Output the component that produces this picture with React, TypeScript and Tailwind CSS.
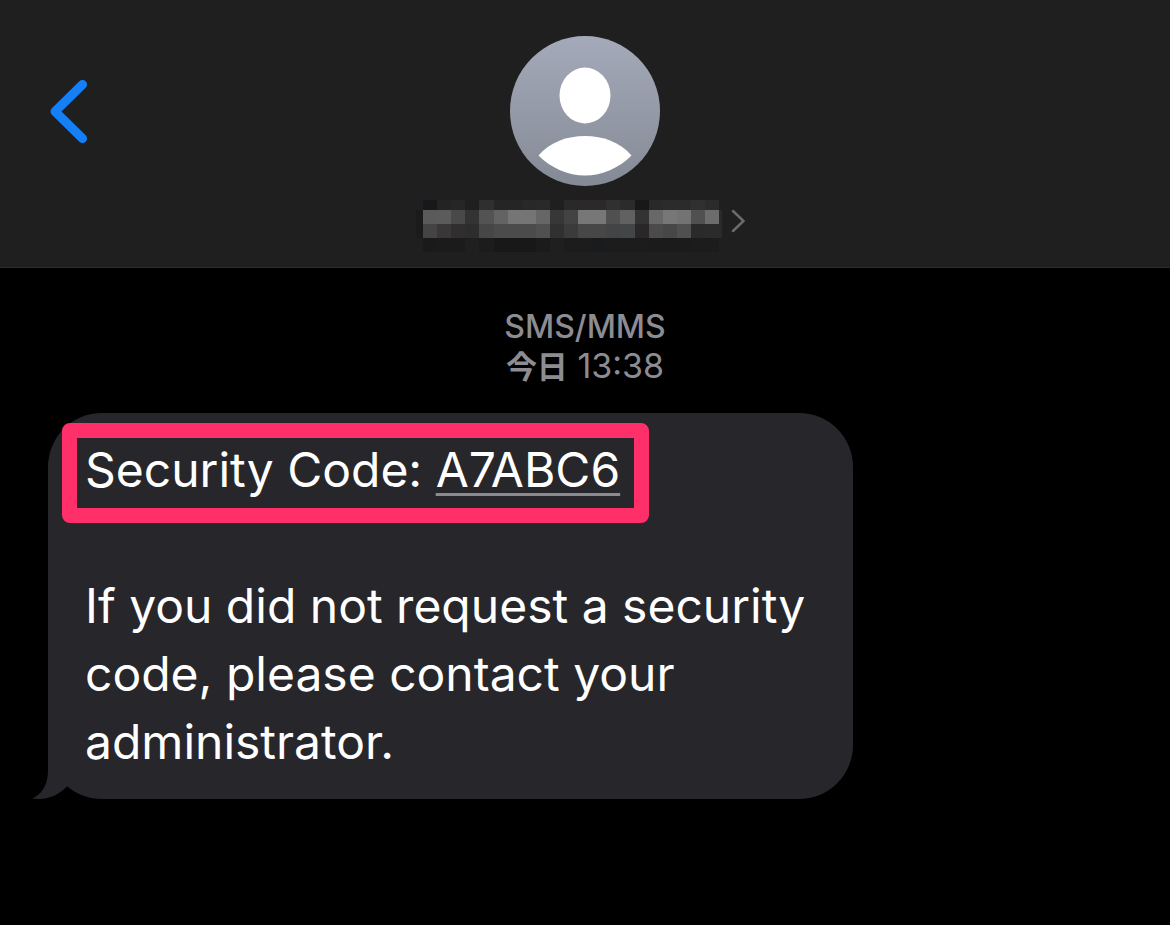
import { useId } from "react";

// brightness of each blurred cell, one row per line
const MOSAIC = [
  { y: 0, height: 10, cells: ["17181b", "232323", "262626", "1f1f1f", "2f2f2f", "252525", "252525", "282828", "29292c", "1f1f1f", "292929", "2b292a", "2b292a", "303030", "2a2b2c", "181818", "292929", "2b2b2b", "2b2b2b", "303030", "2b2b2b"] },
  { y: 10, height: 14, cells: ["5a5a5a", "5b5b5b", "494949", "333333", "535353", "636363", "757575", "757575", "666666", "373737", "434343", "777777", "777777", "505050", "616161", "333333", "686868", "777777", "737373", "505050", "6c6c6c"] },
  { y: 24, height: 14, cells: ["444444", "3a3738", "302e2f", "2d2d2d", "464646", "4b4b4b", "4b4b4b", "4b4b4b", "505050", "303030", "3b3b3b", "474747", "474747", "434445", "444546", "292728", "4b4b4b", "474747", "505050", "2a2a2b", "2b2b2b"] },
  { y: 38, height: 14, cells: ["1a1a1a", "1c1b1b", "1c1b1b", "1f1f1f", "1c1c1c", "181818", "181818", "181818", "1b1b1b", "1f1f1f", "1c1c1c", "1c1c1c", "1a1b1d", "1c1c1c", "1c1c1c", "1c1c1c", "1b1b1b", "1b1b1b", "1b1b1b", "1c1c1c", "1c1c1c"] },
];

const BackIcon = () => (
  <svg width="40" height="64" viewBox="0 0 40 64" fill="none" aria-hidden="true">
    <path
      d="M34.500 4.500 7 31.500 34.500 58.500"
      stroke="#1580f5"
      strokeWidth="9"
      strokeLinecap="round"
      strokeLinejoin="round"
    />
  </svg>
);

const Avatar = () => {
  const id = useId();

  return (
    <svg width="150" height="150" viewBox="0 0 150 150" aria-hidden="true">
      <defs>
        <linearGradient id={id} x1="0" y1="0" x2="0" y2="1">
          <stop offset="0" stopColor="#a5aaba" />
          <stop offset="1" stopColor="#848a95" />
        </linearGradient>
      </defs>
      <circle cx="75" cy="75" r="75" fill={`url(#${id})`} />
      <ellipse cx="75" cy="59.5" rx="25.5" ry="28" fill="#fff" />
      <path
        d="M28.5 119.5C40 106 57 100 75 100s35 6 46.500 19.500C109 132 92 139.500 75 139.500S41 132 28.500 119.500Z"
        fill="#fff"
      />
    </svg>
  );
};

const MaskedNumber = () => (
  <svg width="306" height="52" viewBox="-7 0 306 52" shapeRendering="crispEdges" aria-hidden="true">
    <rect x="-7" y="10" width="7" height="28" fill="#1b1b1b" />
    {MOSAIC.map((row) =>
      row.cells.map((color, i) => (
        <rect
          key={`${row.y}-${i}`}
          x={Math.round(i * 14.1)}
          y={row.y}
          width={Math.round((i + 1) * 14.1) - Math.round(i * 14.1)}
          height={row.height}
          fill={`#${color}`}
        />
      ))
    )}
    <rect x="296" y="10" width="3" height="28" fill="#2a2a2a" />
  </svg>
);

const Header = () => (
  <header className="grid h-[268px] grid-cols-[1fr_auto_1fr] border-b border-[#2b2b2b] bg-[#1f1f1f] px-12">
    <button type="button" aria-label="Back" className="mt-20 h-16 w-10 justify-self-start">
      <BackIcon />
    </button>
    <button
      type="button"
      aria-label="Contact details"
      className="flex flex-col items-center pt-9"
    >
      <Avatar />
      <span className="mt-[14px] flex items-center gap-[9px] pr-[9px]">
        <MaskedNumber />
        <svg width="14" height="24" viewBox="0 0 14 24" fill="none" className="mb-[10px]" aria-hidden="true">
          <path d="M2 2 12.500 12 2 22" stroke="#6b6b6d" strokeWidth="2.500" strokeLinecap="round" />
        </svg>
      </span>
    </button>
  </header>
);

const Message = () => (
  <div className="relative mt-[27px] w-3/4 max-w-[805px] rounded-[54px] bg-[#27262b] px-[37px] py-[23px] text-[48px] leading-[68px] text-white">
    <svg
      width="60"
      height="60"
      viewBox="0 0 60 60"
      className="absolute bottom-0 -left-4"
      aria-hidden="true"
    >
      <path
        d="M16 0V32C16 45 10 56 0 59.500C14 61.500 26 57 35.500 47L44 0Z"
        fill="#27262b"
      />
    </svg>
    <p className="relative">
      Security Code:{" "}
      <a
        href="#code"
        className="underline decoration-[#8b8b8f] decoration-[3px] underline-offset-[6px]"
      >
        A7ABC6
      </a>
    </p>
    <p className="relative mt-[68px]">
      If you did not request a security code, please contact your administrator.
    </p>
    {/* marker around the code */}
    <div className="pointer-events-none absolute top-[10px] left-[14px] h-[100px] w-[587px] rounded-lg border-[15px] border-[#ff3069]" />
  </div>
);

const App = () => {
  return (
    <div className="min-h-screen bg-black font-[Inter,'Noto_Sans_CJK_JP',sans-serif]">
      <Header />
      <main className="px-12 pt-[39px]">
        <div className="text-center leading-[39px] text-[#8d8c93]">
          <p className="text-[32px] font-medium">SMS/MMS</p>
          <p className="text-[34px]">
            <span className="text-[31px] font-bold">今日</span> 13:38
          </p>
        </div>
        <Message />
      </main>
    </div>
  );
};

export default App;
